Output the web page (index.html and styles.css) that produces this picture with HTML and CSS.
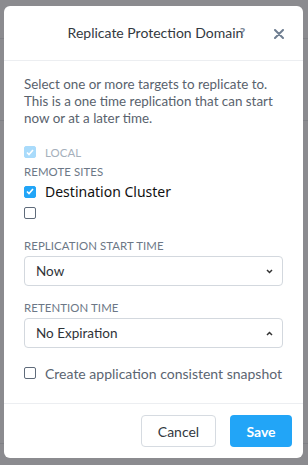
FILE: index.html
```html
<!DOCTYPE html>
<html lang="en">
<head>
    <meta charset="UTF-8">
    <meta name="viewport" content="width=device-width, initial-scale=1.0">
    <title>Replicate Protection Domain</title>
    <link rel="stylesheet" href="styles.css">
</head>
<body>
    <!-- Dimmed page behind the dialog -->
    <div class="backdrop">
        <div class="bg-line line-a"></div>
        <div class="bg-line line-b"></div>
        <div class="bg-line line-c"></div>
    </div>

    <div class="modal">
        <!-- Header -->
        <div class="modal-header">
            <h2 class="modal-title">Replicate Protection Domain<span class="help">?</span></h2>
            <span class="close">
                <svg width="10" height="10" viewBox="0 0 10 10">
                    <path d="M1 1 L9 9 M9 1 L1 9" stroke="#6f7e91" stroke-width="2" stroke-linecap="round"/>
                </svg>
            </span>
        </div>

        <!-- Body -->
        <div class="modal-body">
            <p class="intro">Select one or more targets to replicate to. This is a one time replication that can start now or at a later time.</p>

            <label class="check disabled">
                <span class="box checked"><svg width="8" height="7" viewBox="0 0 8 7"><path d="M1 3.5 L3 5.5 L7 1" fill="none" stroke="#fff" stroke-width="1.6"/></svg></span>
                <span class="caps">Local</span>
            </label>

            <div class="caps section">Remote Sites</div>
            <label class="check site">
                <span class="box checked"><svg width="8" height="7" viewBox="0 0 8 7"><path d="M1 3.5 L3 5.5 L7 1" fill="none" stroke="#fff" stroke-width="1.6"/></svg></span>
                <span>Destination Cluster</span>
            </label>
            <label class="check site">
                <span class="box"></span>
            </label>

            <div class="field">
                <div class="caps">Replication Start Time</div>
                <div class="select">
                    <span>Now</span>
                    <svg width="7" height="5" viewBox="0 0 7 5"><path d="M1 1 L3.5 3.5 L6 1" fill="none" stroke="#333" stroke-width="1.5"/></svg>
                </div>
            </div>

            <div class="field">
                <div class="caps">Retention Time</div>
                <div class="select">
                    <span>No Expiration</span>
                    <svg width="7" height="5" viewBox="0 0 7 5"><path d="M1 4 L3.5 1.5 L6 4" fill="none" stroke="#333" stroke-width="1.5"/></svg>
                </div>
            </div>

            <label class="check snapshot">
                <span class="box"></span>
                <span>Create application consistent snapshot</span>
            </label>
        </div>

        <!-- Footer -->
        <div class="modal-footer">
            <button class="btn btn-default">Cancel</button>
            <button class="btn btn-primary">Save</button>
        </div>
    </div>
</body>
</html>
```

FILE: styles.css
```css
/* Base styles */
body {
    margin: 0;
    padding: 6px 5px 7px 4px;
    background: #8b8b8f;
    font-family: Lato, "Open Sans", sans-serif;
    color: #5b6571;
    position: relative;
    height: 465px;
    box-sizing: border-box;
    overflow: hidden;
}

/* Faint rows of the page under the overlay */
.backdrop .bg-line {
    position: absolute;
    left: 0;
    right: 0;
    height: 1px;
    background: #7f8085;
}

.line-a { top: 38px; }
.line-b { top: 120px; }
.line-c { top: 443px; }

/* Dialog */
.modal {
    position: relative;
    background: #fff;
    border-radius: 6px;
    height: 452px;
    display: flex;
    flex-direction: column;
}

.modal-header {
    height: 54px;
    border-bottom: 1px solid #eceef1;
    display: flex;
    align-items: center;
    justify-content: center;
    position: relative;
}

.modal-title {
    margin: 0 0 1px 4px;
    font-size: 14px;
    font-weight: 400;
    color: #33393f;
    position: relative;
}

/* help mark sits over the end of the title, as in the product */
.help {
    position: absolute;
    right: -2px;
    top: 0;
    font-size: 12px;
    font-weight: 700;
    color: #7a8797;
}

.close {
    position: absolute;
    right: 19px;
    top: 23px;
    line-height: 0;
}

.modal-body {
    padding: 15px 20px 0 20px;
    flex: 1;
}

.intro {
    margin: 0 0 15px 0;
    font-size: 13.4px;
    line-height: 17px;
    color: #59626d;
}

/* Checkboxes */
.check {
    display: flex;
    align-items: center;
    gap: 9px;
    height: 20px;
}

.box {
    width: 10px;
    height: 10px;
    border: 1px solid #5f6b7a;
    border-radius: 2px;
    display: flex;
    align-items: center;
    justify-content: center;
}

.box.checked {
    background: #22a5f7;
    border-color: #22a5f7;
}

.disabled .box.checked {
    background: #a9dbfb;
    border-color: #a9dbfb;
}

.caps {
    text-transform: uppercase;
    font-size: 11.4px;
    letter-spacing: 0.1px;
    color: #6c7786;
}

.disabled .caps {
    color: #a5afbb;
}

.section {
    height: 19px;
    line-height: 19px;
}

.site {
    height: 21px;
    font-family: "Noto Sans", sans-serif;
    font-size: 14px;
    color: #111;
}

.field {
    margin-top: 16px;
}

.field + .field {
    margin-top: 15px;
}

.field .caps {
    line-height: 14px;
    margin-bottom: 3px;
}

.select {
    height: 28px;
    border: 1px solid #d3d8de;
    border-radius: 4px;
    display: flex;
    align-items: center;
    justify-content: space-between;
    padding: 0 9px 0 11px;
    font-size: 13.5px;
    color: #2f3338;
}

.snapshot {
    margin-top: 15px;
    font-size: 14px;
    color: #5b6571;
}

/* Footer */
.modal-footer {
    border-top: 1px solid #eceef1;
    height: 54px;
    display: flex;
    justify-content: flex-end;
    align-items: center;
    gap: 14px;
    padding: 0 11px 0 0;
}

.btn {
    height: 32px;
    border-radius: 4px;
    font-family: Lato, sans-serif;
    font-size: 14px;
    padding: 0;
}

.btn-default {
    width: 75px;
    background: #fff;
    border: 1px solid #d6dbe1;
    color: #33393f;
}

.btn-primary {
    width: 62px;
    background: #22a5f7;
    border: none;
    color: #fff;
    font-weight: 700;
}
```
